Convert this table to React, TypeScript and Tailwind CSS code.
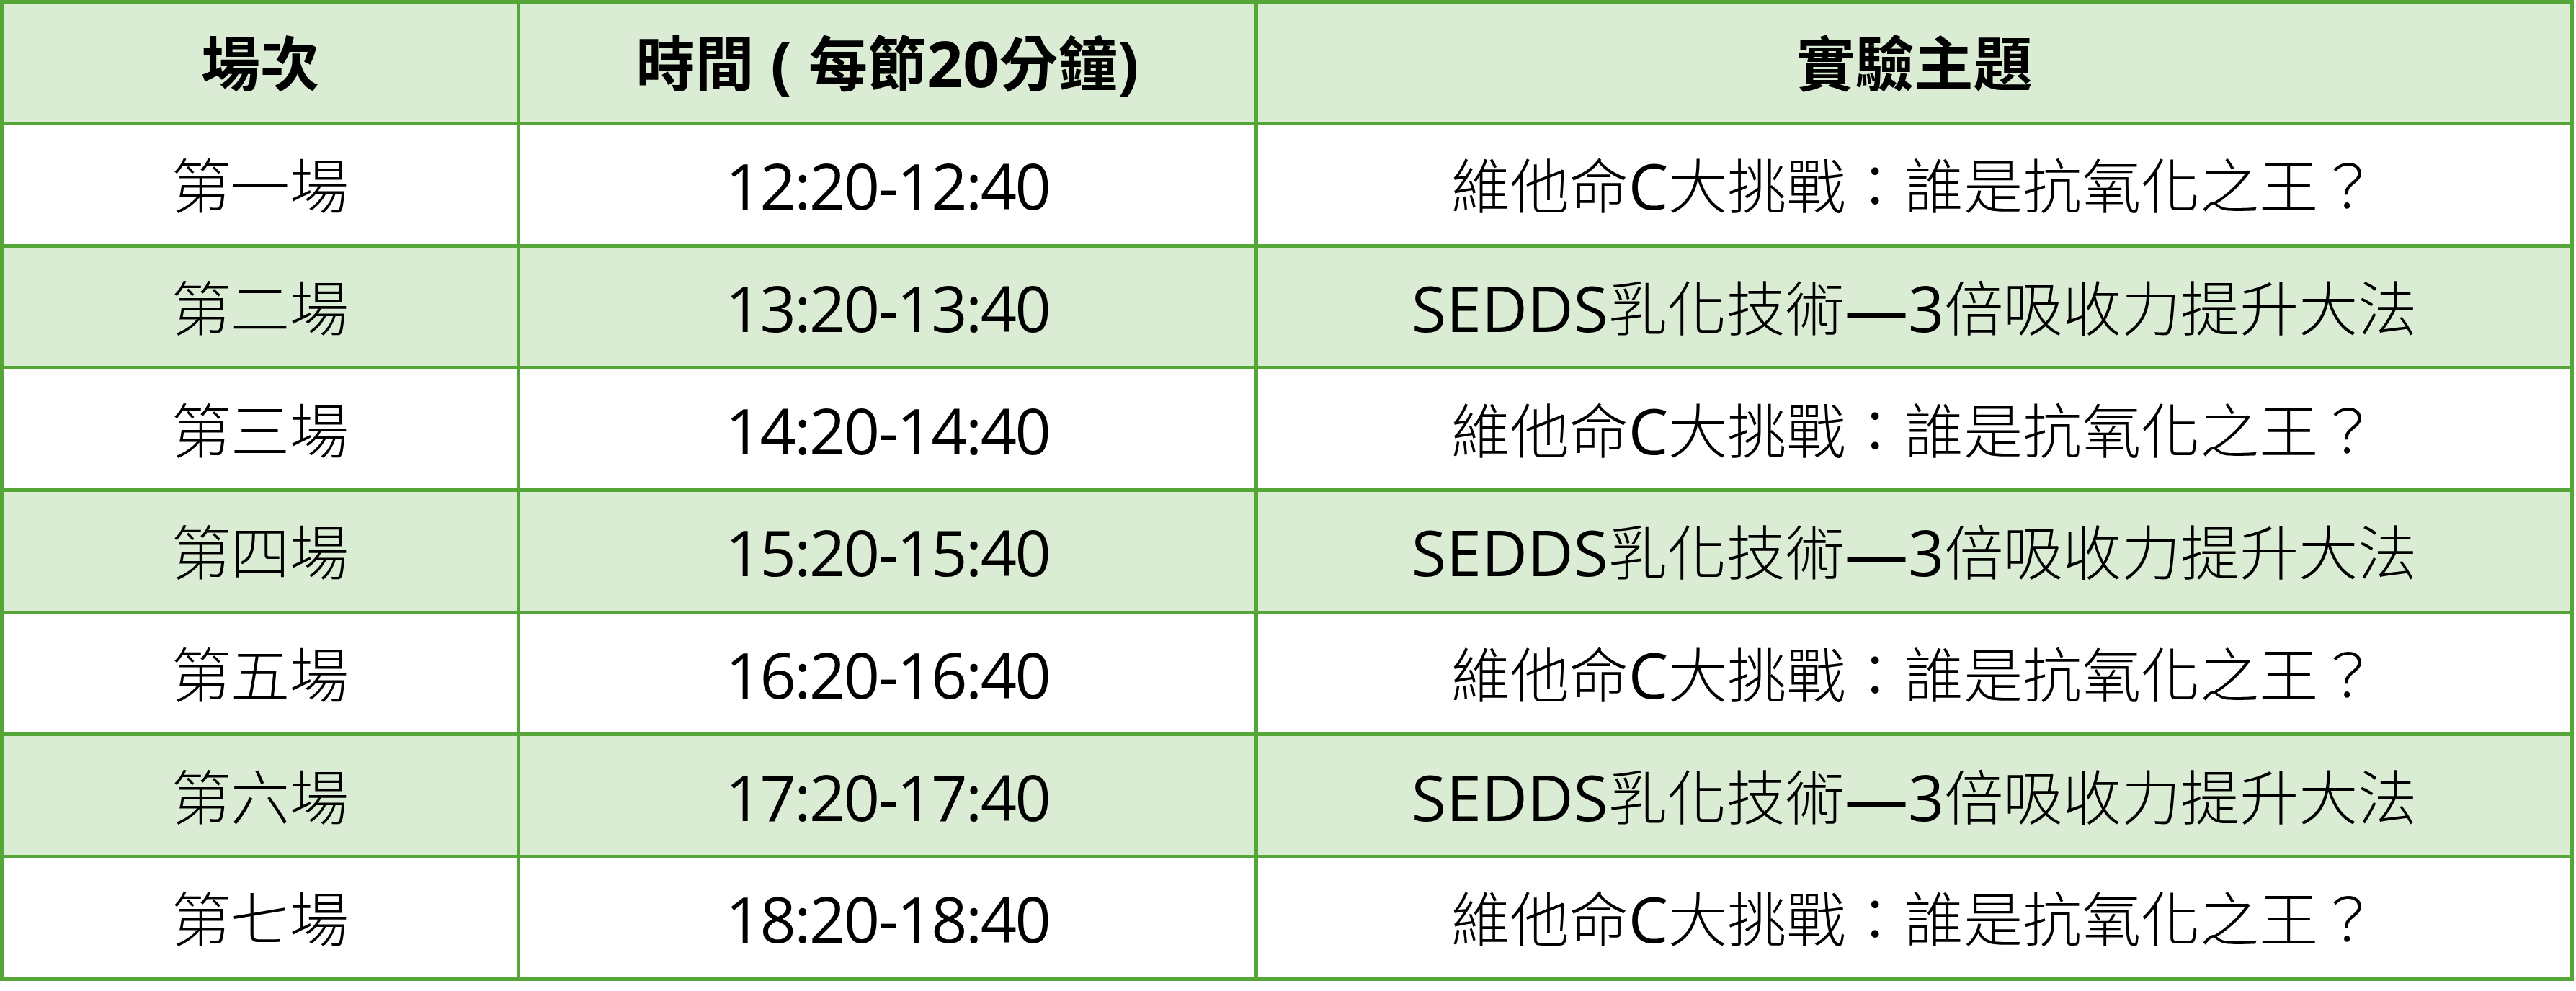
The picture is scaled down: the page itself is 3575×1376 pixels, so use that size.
const rows = [
  { name: "第一場", time: "12:20-12:40", topic: "c" },
  { name: "第二場", time: "13:20-13:40", topic: "s" },
  { name: "第三場", time: "14:20-14:40", topic: "c" },
  { name: "第四場", time: "15:20-15:40", topic: "s" },
  { name: "第五場", time: "16:20-16:40", topic: "c" },
  { name: "第六場", time: "17:20-17:40", topic: "s" },
  { name: "第七場", time: "18:20-18:40", topic: "c" },
];

// latin runs are set a bit larger than the CJK, like the Segoe/JhengHei pair
function Lat({ children }: { children: React.ReactNode }) {
  return <span className="text-[88px] font-normal">{children}</span>;
}

function LatBold({ children }: { children: React.ReactNode }) {
  return <span className="text-[88px] font-bold">{children}</span>;
}

function Topic({ kind }: { kind: string }) {
  if (kind === "c") {
    return (
      <>
        維他命<Lat>C</Lat>大挑戰：誰是抗氧化之王？
      </>
    );
  }
  return (
    <>
      <Lat>SEDDS</Lat>乳化技術<Lat>—3</Lat>倍吸收力提升大法
    </>
  );
}

export default function App() {
  return (
    <div className="min-h-screen bg-white font-['Open_Sans','Noto_Sans_CJK_TC',sans-serif] text-black">
      <div className="grid w-[3572px] grid-cols-[712px_1019px_1821px] gap-[5px] bg-[#55a539] p-[5px]">
        {/* header */}
        <div className="flex h-[164px] items-center justify-center bg-[#dbecd4] text-[82px] font-bold leading-none">
          場次
        </div>
        <div className="flex h-[164px] items-center justify-center bg-[#dbecd4] text-[82px] font-bold leading-none">
          時間<LatBold>&nbsp;(&nbsp;</LatBold>每節<LatBold>20</LatBold>分鐘<LatBold>)</LatBold>
        </div>
        <div className="flex h-[164px] items-center justify-center bg-[#dbecd4] text-[82px] font-bold leading-none">
          實驗主題
        </div>

        {rows.map((r, i) => {
          const bg = i % 2 === 1 ? "bg-[#dbecd4]" : "bg-white";
          return (
            <div key={r.name} className="contents">
              <div className={`flex h-[164.7px] items-center justify-center pt-[2px] text-[82px] font-light leading-none ${bg}`}>
                {r.name}
              </div>
              <div className={`flex h-[164.7px] items-center justify-center pt-[2px] text-[88px] leading-none tracking-[-2.5px] ${bg}`}>
                {r.time}
              </div>
              <div className={`flex h-[164.7px] items-center justify-center pt-[2px] text-[82px] font-light leading-none ${bg}`}>
                <Topic kind={r.topic} />
              </div>
            </div>
          );
        })}
      </div>
    </div>
  );
}
